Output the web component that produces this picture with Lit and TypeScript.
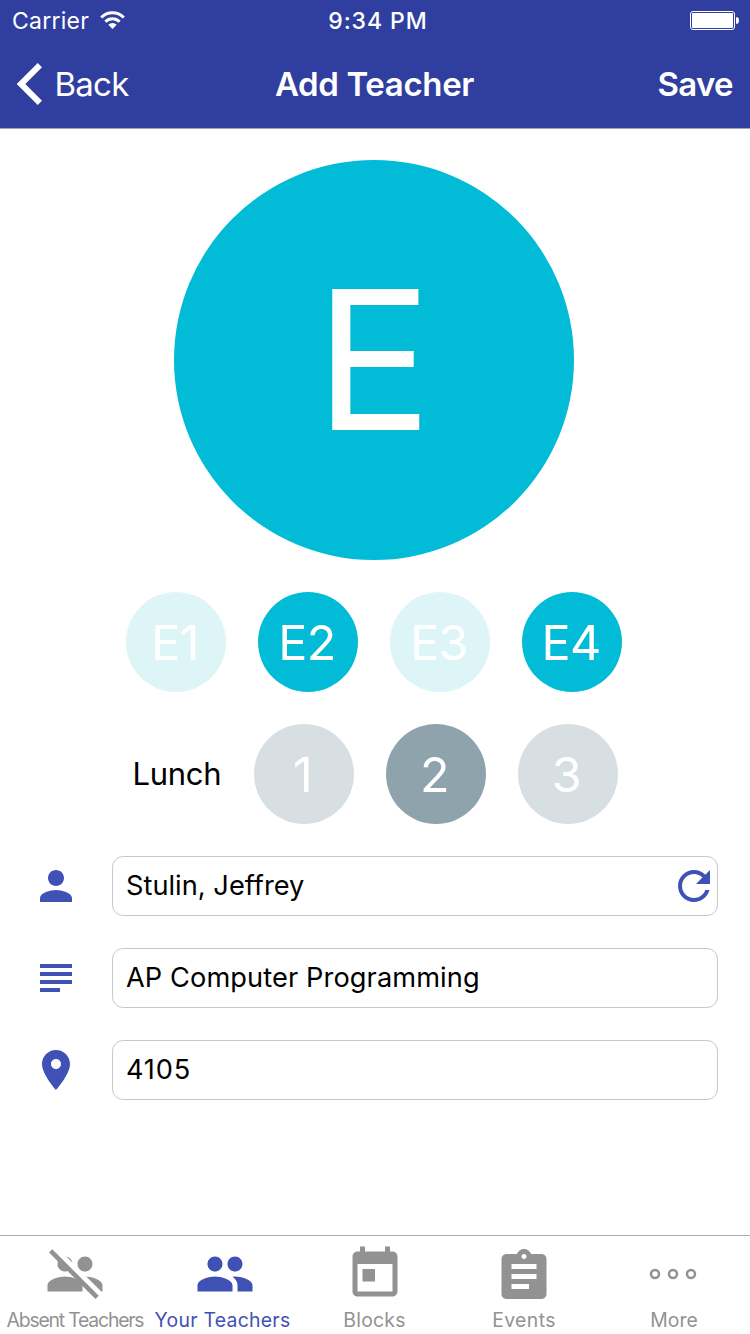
import { LitElement, html, css, svg } from "lit";
import { customElement, property, state } from "lit/decorators.js";
import { classMap } from "lit/directives/class-map.js";

const PEOPLE =
  "M16 11c1.66 0 2.99-1.34 2.99-3S17.66 5 16 5c-1.66 0-3 1.34-3 3s1.34 3 3 3zm-8 0c1.66 0 2.99-1.34 2.99-3S9.66 5 8 5C6.34 5 5 6.34 5 8s1.34 3 3 3zm0 2c-2.33 0-7 1.17-7 3.5V19h14v-2.5c0-2.33-4.67-3.5-7-3.5zm8 0c-.29 0-.62.02-.97.05 1.16.84 1.97 1.97 1.97 3.45V19h6v-2.5c0-2.33-4.67-3.5-7-3.5z";

const ICONS = {
  person: svg`<path d="M12 12c2.21 0 4-1.79 4-4s-1.79-4-4-4-4 1.79-4 4 1.79 4 4 4zm0 2c-2.67 0-8 1.34-8 4v2h16v-2c0-2.66-5.33-4-8-4z"/>`,
  subject: svg`<path d="M14 17H4v2h10v-2zm6-8H4v2h16V9zM4 15h16v-2H4v2zM4 5v2h16V5H4z"/>`,
  place: svg`<path d="M12 2C8.13 2 5 5.13 5 9c0 5.25 7 13 7 13s7-7.75 7-13c0-3.87-3.13-7-7-7zm0 9.5c-1.38 0-2.5-1.12-2.5-2.5s1.12-2.5 2.5-2.5 2.5 1.12 2.5 2.5-1.12 2.5-2.5 2.5z"/>`,
  refresh: svg`<path d="M17.65 6.35C16.2 4.9 14.21 4 12 4c-4.42 0-7.99 3.58-7.99 8s3.57 8 7.99 8c3.73 0 6.84-2.55 7.73-6h-2.08c-.82 2.33-3.04 4-5.65 4-3.31 0-6-2.69-6-6s2.69-6 6-6c1.66 0 3.14.69 4.22 1.78L13 11h7V4l-2.35 2.35z"/>`,
  people: svg`<path d=${PEOPLE}/>`,
  absent: svg`<path d=${PEOPLE}/><path class="gap" d="M2.7 2.1L4.2 .7L23.1 19.6L21.6 21z"/><path d="M2.9 2.1L1.6 3.4L20.2 22L21.5 20.7z"/>`,
  today: svg`<path d="M19 3h-1V1h-2v2H8V1H6v2H5c-1.11 0-1.99.9-1.99 2L3 19c0 1.1.89 2 2 2h14c1.1 0 2-.9 2-2V5c0-1.1-.9-2-2-2zm0 16H5V8h14v11zM7 10h5v5H7z"/>`,
  assignment: svg`<path transform="translate(0 .2)" d="M19 3h-4.18C14.4 1.84 13.3 1 12 1c-1.3 0-2.4.84-2.82 2H5c-1.1 0-2 .9-2 2v14c0 1.1.9 2 2 2h14c1.1 0 2-.9 2-2V5c0-1.1-.9-2-2-2zm-7 0c.55 0 1 .45 1 1s-.45 1-1 1-1-.45-1-1 .45-1 1-1zm2 14H7v-2h7v2zm3-4H7v-2h10v2zm0-4H7V7h10v2z"/>`,
  more: svg`<g class="rings"><circle cx="4.8" cy="12" r="1.6"/><circle cx="12" cy="12" r="1.6"/><circle cx="19.2" cy="12" r="1.6"/></g>`,
};

type IconName = keyof typeof ICONS;

@customElement("app-icon")
class AppIcon extends LitElement {
  @property() name: IconName = "person";
  static styles = css`
    :host { display: block; width: 48px; height: 48px; flex: none; }
    svg { display: block; width: 100%; height: 100%; fill: currentColor; overflow: visible; }
    .gap { fill: #fff; }
    .rings { fill: none; stroke: currentColor; stroke-width: 1; }
  `;
  render() {
    return html`<svg viewBox="0 0 24 24">${ICONS[this.name]}</svg>`;
  }
}

@customElement("app-root")
class AppRoot extends LitElement {
  @state() private blocks = [
    { label: "E1", on: false },
    { label: "E2", on: true },
    { label: "E3", on: false },
    { label: "E4", on: true },
  ];
  @state() private lunch = 2;

  private fields: { icon: IconName; value: string; cls: string; refresh?: boolean }[] = [
    { icon: "person", value: "Stulin, Jeffrey", cls: "name", refresh: true },
    { icon: "subject", value: "AP Computer Programming", cls: "course" },
    { icon: "place", value: "4105", cls: "room" },
  ];

  private tabs: { icon: IconName; label: string; cls: string }[] = [
    { icon: "absent", label: "Absent Teachers", cls: "absent" },
    { icon: "people", label: "Your Teachers", cls: "active" },
    { icon: "today", label: "Blocks", cls: "blocks" },
    { icon: "assignment", label: "Events", cls: "events" },
    { icon: "more", label: "More", cls: "more" },
  ];

  static styles = css`
    :host {
      display: flex;
      flex-direction: column;
      width: 750px;
      height: 1334px;
      background: #fff;
      color: #000;
      font-family: Inter, "Liberation Sans", sans-serif;
      overflow: hidden;
    }
    * { box-sizing: border-box; }
    header { background: #303f9f; color: #fff; height: 129px; border-bottom: 1px solid #a5a5a8; flex: none; }
    .status, .nav { display: grid; grid-template-columns: 1fr auto 1fr; align-items: center; }
    .status { height: 40px; padding: 0 11px 0 12px; font-size: 23px; line-height: 38px; }
    .carrier { display: flex; align-items: center; gap: 11px; letter-spacing: 0.25px; }
    .carrier span, .time { padding-top: 2px; }
    .wifi { width: 25px; height: 19px; display: block; }
    .time { font-weight: 500; letter-spacing: 0.95px; font-size: 23px; padding-left: 5px; }
    .battery { width: 49px; height: 20px; justify-self: end; display: block; }
    .nav { height: 88px; padding: 0 17px 0 16px; font-size: 33px; line-height: 88px; }
    .back { display: flex; align-items: center; gap: 11.5px; letter-spacing: -0.75px; }
    .chevron { width: 27px; height: 42px; display: block; }
    .title { font-weight: 600; letter-spacing: -0.35px; }
    .save { font-weight: 600; justify-self: end; letter-spacing: -0.65px; }
    main { flex: 1; padding: 31px 32px 0; display: flex; flex-direction: column; align-items: center; gap: 32px; }
    .circle { border-radius: 50%; color: #fff; background: #02bbd7; display: flex; align-items: center; justify-content: center; flex: none; }
    .avatar { width: 400px; height: 400px; font-size: 194px; line-height: 400px; margin-right: 2px; padding-right: 1px; }
    .row { display: flex; gap: 32px; align-items: center; margin-right: 2px; }
    .small { width: 100px; height: 100px; font-size: 48.5px; line-height: 98px; letter-spacing: -0.7px; padding: 2px 2px 0 0; }
    .grey { background: #8fa3ad; }
    .off { background: #def5f8; }
    .grey.off { background: #d8dfe2; }
    .lunch { margin-right: 0; }
    .label { font-size: 31px; letter-spacing: -0.3px; width: 89px; padding-bottom: 2px; }
    .fields { width: 100%; display: flex; flex-direction: column; gap: 32px; }
    .field { display: flex; align-items: center; gap: 32px; color: #3f51b5; }
    .input { flex: 1; height: 60px; border: 1px solid #c8c8c8; border-radius: 11px; display: flex; align-items: center; justify-content: space-between; padding-left: 13px; color: #000; font-size: 27.2px; letter-spacing: 0.1px; }
    .input span { padding-bottom: 2px; }
    .name span { letter-spacing: 0.03px; }
    .room span { letter-spacing: 0.8px; }
    .input app-icon { color: #3f51b5; margin-right: -1px; }
    footer { flex: none; height: 99px; border-top: 1px solid #acacac; display: grid; grid-template-columns: repeat(5, 1fr); color: #929292; }
    .tab { display: flex; flex-direction: column; align-items: center; padding-top: 8px; }
    .tab app-icon { width: 60px; height: 60px; }
    .tab span { font-size: 19.4px; line-height: 24px; margin-top: 4px; letter-spacing: 0.25px; white-space: nowrap; }
    .absent span { letter-spacing: -1.2px; }
    .active { color: #3f51b5; }
    .active span { letter-spacing: 0.28px; padding-right: 5px; }
    .blocks span { padding-right: 1px; }
    .events { padding-top: 10px; padding-right: 2px; }
    .events span { margin-top: 2px; letter-spacing: 0.4px; }
    .more { padding-right: 4px; }
    .more span { padding-left: 2px; letter-spacing: 0; }
  `;

  private circle(label: string, on: boolean, grey: boolean, toggle: () => void) {
    return html`<div class=${classMap({ circle: true, small: true, grey, off: !on })} @click=${toggle}>${label}</div>`;
  }

  render() {
    return html`
      <header>
        <div class="status">
          <div class="carrier">
            <span>Carrier</span>
            <svg class="wifi" viewBox="0 0.8 25 19">
              <g fill="none" stroke="#fff" stroke-width="3">
                <path d="M1.2 7.3A16 16 0 0 1 23.8 7.3" />
                <path d="M5.4 11.6A10 10 0 0 1 19.6 11.6" />
              </g>
              <path fill="#fff" d="M8.3 14.6A6 6 0 0 1 16.7 14.6L12.5 18.9z" />
            </svg>
          </div>
          <div class="time">9:34 PM</div>
          <svg class="battery" viewBox="0 0 49 20">
            <rect x="0.5" y="1.5" width="44" height="18" rx="2.5" fill="none" stroke="#fff" />
            <rect x="2" y="3" width="41" height="15" rx="1" fill="#fff" />
            <path fill="#fff" d="M46 7.3h1.4q1.6 .6 1.6 3.2t-1.6 3.2H46z" />
          </svg>
        </div>
        <div class="nav">
          <div class="back">
            <svg class="chevron" viewBox="0 0 27 42">
              <path d="M.7 21L21.7 0L26 4.3L9.3 21L26 37.7L21.7 42z" fill="#fff" />
            </svg>
            <span>Back</span>
          </div>
          <div class="title">Add Teacher</div>
          <div class="save">Save</div>
        </div>
      </header>
      <main>
        <div class="circle avatar">E</div>
        <div class="row">
          ${this.blocks.map((b) =>
            this.circle(b.label, b.on, false, () => {
              this.blocks = this.blocks.map((x) => (x === b ? { ...x, on: !x.on } : x));
            }),
          )}
        </div>
        <div class="row lunch">
          <div class="label">Lunch</div>
          ${[1, 2, 3].map((n) => this.circle(String(n), n === this.lunch, true, () => (this.lunch = n)))}
        </div>
        <div class="fields">
          ${this.fields.map(
            (f) => html`<div class="field">
              <app-icon name=${f.icon}></app-icon>
              <div class="input ${f.cls}">
                <span>${f.value}</span>
                ${f.refresh ? html`<app-icon name="refresh"></app-icon>` : ""}
              </div>
            </div>`,
          )}
        </div>
      </main>
      <footer>
        ${this.tabs.map(
          (t) => html`<div class="tab ${t.cls}">
            <app-icon name=${t.icon}></app-icon>
            <span>${t.label}</span>
          </div>`,
        )}
      </footer>
    `;
  }
}
